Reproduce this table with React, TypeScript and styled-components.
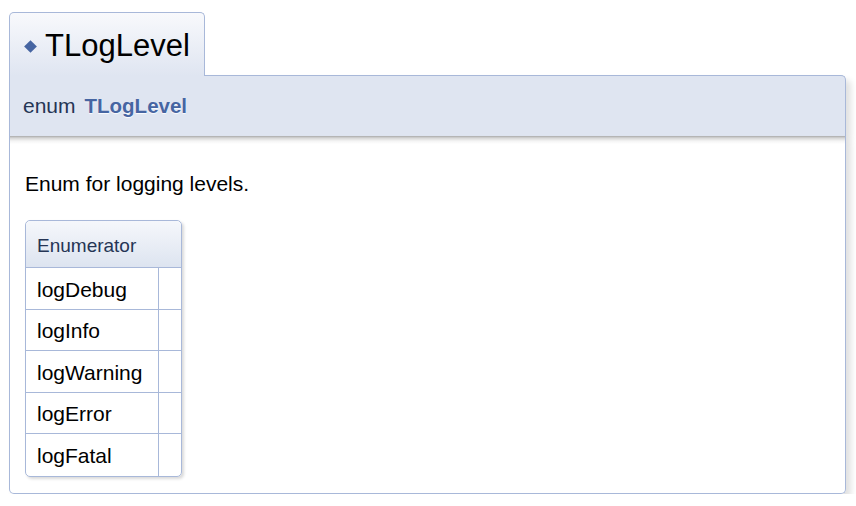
import React from "react";
import styled, { createGlobalStyle } from "styled-components";

const Global = createGlobalStyle`
  html, body { margin: 0; padding: 0; background: #ffffff; }
  body { font-family: "Liberation Sans", Arial, sans-serif; color: #000; }
`;

const Page = styled.div`
  padding: 12px 10px 0 9px;
  width: 856px;
  box-sizing: border-box;
`;

const Tab = styled.div`
  display: inline-flex;
  align-items: center;
  gap: 10px;
  height: 64px;
  margin-bottom: -1px;
  box-sizing: border-box;
  padding: 3px 14px 0 16px;
  border: 1px solid #a8b8d9;
  border-bottom: none;
  border-radius: 5px 5px 0 0;
  background: linear-gradient(to bottom, #f8f9fc 0%, #dfe5f1 100%);
  font-size: 31px;
  color: #000;
  position: relative;
  z-index: 1;
`;

const Diamond = styled.span`
  display: inline-block;
  width: 9px;
  height: 9px;
  background: #4665a2;
  transform: rotate(45deg);
  margin-top: 1px;
`;

const Proto = styled.div`
  height: 61px;
  box-sizing: border-box;
  display: flex;
  align-items: center;
  padding: 0 14px 0 13px;
  border: 1px solid #a8b8d9;
  border-bottom: none;
  border-radius: 0 5px 0 0;
  background: #dfe5f1;
  font-size: 21px;
  color: #253555;
  box-shadow: 5px 5px 6px rgba(0, 0, 0, 0.12);
  gap: 9px;
`;

const ProtoName = styled.b`
  color: #4665a2;
  font-weight: 700;
  font-size: 20.5px;
  text-shadow: 0 1px 1px rgba(255, 255, 255, 0.9);
`;

const Doc = styled.div`
  border: 1px solid #a8b8d9;
  border-top: none;
  border-radius: 0 0 5px 5px;
  background: linear-gradient(to bottom, #aaaaaa 0px, #d6d6d6 2px, #f4f4f4 5px, #ffffff 8px);
  box-shadow: 5px 5px 6px rgba(0, 0, 0, 0.12);
  padding: 36px 15px 17px 15px;
  font-size: 21px;
  height: 358px;
  box-sizing: border-box;
`;

const Para = styled.p`
  margin: 0 0 24px 0;
  line-height: 24px;
`;

const FieldTable = styled.table`
  border-collapse: separate;
  border-spacing: 0;
  border: 1px solid #a8b8d9;
  border-radius: 5px;
  box-shadow: 2px 2px 3px rgba(0, 0, 0, 0.15);
  font-size: 21px;
`;

const Th = styled.th`
  height: 47px;
  box-sizing: border-box;
  text-align: left;
  font-weight: 400;
  font-size: 19px;
  color: #253555;
  padding: 3px 11px 0 11px;
  background: linear-gradient(to bottom, #f5f7fb 0%, #dde4f0 100%);
  border-bottom: 1px solid #a8b8d9;
  border-radius: 5px 5px 0 0;
`;

const NameCell = styled.td<{ $last?: boolean }>`
  height: 41.5px;
  box-sizing: border-box;
  padding: 3px 16px 0 11px;
  white-space: nowrap;
  border-right: 1px solid #a8b8d9;
  border-bottom: ${(p) => (p.$last ? "none" : "1px solid #a8b8d9")};
`;

const DocCell = styled.td<{ $last?: boolean }>`
  width: 22px;
  padding: 0;
  border-bottom: ${(p) => (p.$last ? "none" : "1px solid #a8b8d9")};
`;

const values = ["logDebug", "logInfo", "logWarning", "logError", "logFatal"];

export default function App() {
  return (
    <>
      <Global />
      <Page>
        <Tab>
          <Diamond />
          <span>TLogLevel</span>
        </Tab>
        <Proto>
          <span>enum</span>
          <ProtoName>TLogLevel</ProtoName>
        </Proto>
        <Doc>
          <Para>Enum for logging levels.</Para>
          <FieldTable>
            <thead>
              <tr>
                <Th colSpan={2}>Enumerator</Th>
              </tr>
            </thead>
            <tbody>
              {values.map((v, i) => (
                <tr key={v}>
                  <NameCell $last={i === values.length - 1}>{v}</NameCell>
                  <DocCell $last={i === values.length - 1} />
                </tr>
              ))}
            </tbody>
          </FieldTable>
        </Doc>
      </Page>
    </>
  );
}
